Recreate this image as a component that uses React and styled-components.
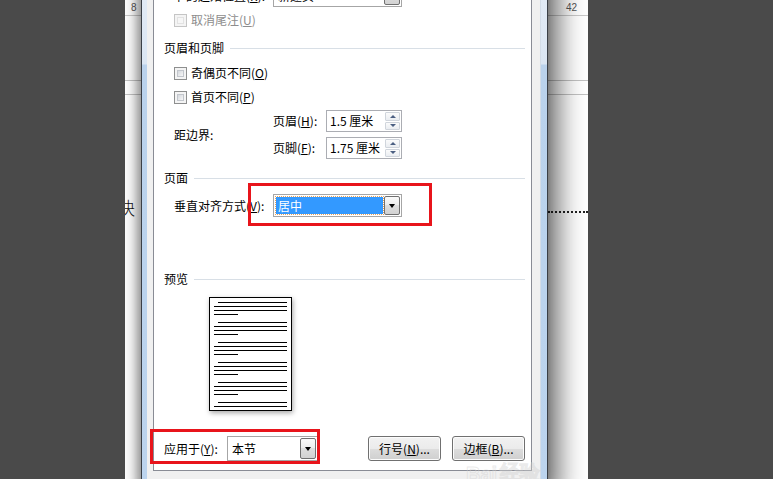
import React from "react";
import styled, { createGlobalStyle } from "styled-components";

const GlobalStyle = createGlobalStyle`
  html, body {
    margin: 0;
    padding: 0;
    overflow: hidden;
  }
  body {
    font-family: "Noto Sans CJK SC", "Noto Sans", sans-serif;
  }
`;

const Screen = styled.div`
  position: relative;
  display: flex;
  width: 773px;
  height: 479px;
  overflow: hidden;
  background: #4a4a4a;
`;

const Gutter = styled.div`
  flex: ${(p) => (p.$w ? `0 0 ${p.$w}px` : "1")};
`;

const DocPage = styled.div`
  position: relative;
  flex: 0 0 463px;
  display: flex;
  flex-direction: column;
  background: #fff;
  overflow: hidden;
`;

const RulerRow = styled.div`
  display: flex;
  justify-content: space-between;
  align-items: center;
  height: 15px;
  padding: 0 11px 0 6px;
  border-bottom: 1px solid #c9c9c9;
  font-family: "Liberation Sans", Arial, sans-serif;
  font-size: 10px;
  color: #555;
`;

const TableBand = styled.div`
  margin-top: 64px;
  height: 13px;
  border-top: 1px solid #c2c2c2;
  border-bottom: 1px solid #c2c2c2;
`;

const TextLine = styled.div`
  display: flex;
  align-items: flex-end;
  margin-top: 103px;
  height: 18px;
`;

const Glyph = styled.span`
  margin-left: -8px;
  font-size: 18px;
  line-height: 18px;
  color: #111;
  font-weight: 300;
`;

const Dots = styled.span`
  margin-left: auto;
  margin-bottom: 3px;
  width: 40px;
  border-bottom: 2px dotted #222;
`;

const Dialog = styled.div`
  position: absolute;
  left: 16px;
  top: -40px;
  width: 407px;
  height: 540px;
  box-sizing: border-box;
  display: flex;
  padding: 0 6px 0 5px;
  border-left: 1px solid #3a3f46;
  border-right: 1px solid #3a3f46;
  background: linear-gradient(#e4ecf6 0px, #dbe6f3 104px, #bad2ec 105px, #bcd4ee 100%);
  box-shadow: -4px 0 10px rgba(0, 0, 0, 0.35), 10px 0 26px rgba(0, 0, 0, 0.6);
`;

const Body = styled.div`
  flex: 1;
  padding: 10px 8px 0 6px;
  background: #f0f0f0;
  border-right: 1px solid #d3dce7;
`;

const TabPage = styled.div`
  display: flex;
  flex-direction: column;
  padding: 0 6px 9px 10px;
  border: 1px solid #898c95;
  background: #fff;
  font-size: 12px;
  line-height: 16px;
  color: #000;
`;

const Key = styled.u`
  text-underline-offset: 1px;
`;

const SectionHead = styled.div`
  display: flex;
  align-items: center;
  gap: 6px;
  height: 16px;
  margin-top: ${(p) => p.$mt}px;
`;

const Rule = styled.div`
  flex: 1;
  height: 1px;
  background: #d8dfe6;
`;

const Row = styled.div`
  position: relative;
  display: flex;
  align-items: center;
  height: ${(p) => p.$h}px;
  margin-top: ${(p) => p.$mt}px;
  padding-left: ${(p) => (p.$indent ? 10 : 0)}px;
`;

const Label = styled.span`
  flex: 0 0 ${(p) => p.$w}px;
  white-space: nowrap;
  color: ${(p) => (p.$disabled ? "#8d8d8d" : "#000")};
`;

const Combo = styled.div`
  box-sizing: border-box;
  display: flex;
  width: ${(p) => p.$w}px;
  height: 100%;
  padding: 1px;
  border: 1px solid #a6a6a6;
  background: #fff;
`;

const ComboValue = styled.div`
  flex: 1;
  display: flex;
  align-items: center;
  padding-left: ${(p) => (p.$selected ? 2 : 3)}px;
  margin: ${(p) => (p.$selected ? "1px" : "0")};
  background: ${(p) => (p.$selected ? "#3399ff" : "transparent")};
  color: ${(p) => (p.$selected ? "#fff" : "#000")};
  outline: ${(p) => (p.$selected ? "1px dotted #e8a25a" : "none")};
`;

const DropButton = styled.div`
  box-sizing: border-box;
  flex: 0 0 16px;
  display: flex;
  align-items: center;
  justify-content: center;
  border: 1px solid #707070;
  border-radius: 2px;
  background: linear-gradient(#fafafa, #ececec 50%, #dedede 50%, #d2d2d2);

  &::after {
    content: "";
    border-left: 3.5px solid transparent;
    border-right: 3.5px solid transparent;
    border-top: 4px solid #000;
  }
`;

const CheckRow = styled.label`
  display: flex;
  align-items: center;
  gap: 4px;
  height: 16px;
  margin-top: ${(p) => p.$mt}px;
  padding-left: 10px;
  color: ${(p) => (p.$disabled ? "#8d8d8d" : "#000")};
`;

const Box = styled.span`
  position: relative;
  box-sizing: border-box;
  width: 13px;
  height: 13px;
  border: 1px solid ${(p) => (p.$disabled ? "#c5c5c5" : "#8e8f8f")};
  background: #f4f4f4;

  &::after {
    content: "";
    position: absolute;
    inset: 2px;
    border: 1px solid ${(p) => (p.$disabled ? "#e2e2e2" : "#c2c6cc")};
    background: ${(p) =>
      p.$disabled ? "#f6f6f6" : "linear-gradient(135deg, #d4d8dd, #f7f7f7)"};
  }
`;

const MarginGroup = styled.div`
  display: flex;
  align-items: center;
  margin-top: ${(p) => p.$mt}px;
  padding-left: 10px;
`;

const SpinColumn = styled.div`
  display: flex;
  flex-direction: column;
  gap: 5px;
`;

const SpinRow = styled.div`
  display: flex;
  align-items: center;
  height: 22px;
`;

const SpinInput = styled.div`
  box-sizing: border-box;
  display: flex;
  align-items: center;
  width: 76px;
  height: 100%;
  padding: 1px 1px 1px 3px;
  border: 1px solid #abadb3;
  background: #fff;
`;

const SpinText = styled.span`
  flex: 1;
`;

const SpinButtons = styled.div`
  display: flex;
  flex-direction: column;
  gap: 1px;
  width: 15px;
  height: 100%;
`;

const SpinButton = styled.div`
  flex: 1;
  display: flex;
  align-items: center;
  justify-content: center;
  border: 1px solid #d0d5dc;
  border-radius: 1px;
  background: linear-gradient(#fbfbfb, #eaedf1);

  &::after {
    content: "";
    border-left: 3px solid transparent;
    border-right: 3px solid transparent;
    ${(p) => (p.$down ? "border-top" : "border-bottom")}: 3px solid #4b5f82;
  }
`;

const Highlight = styled.div`
  position: absolute;
  left: ${(p) => p.$x}px;
  top: ${(p) => p.$y}px;
  width: ${(p) => p.$w}px;
  height: ${(p) => p.$h}px;
  box-sizing: border-box;
  border: 3px solid #e8141b;
  pointer-events: none;
`;

const PreviewPage = styled.div`
  display: flex;
  flex-direction: column;
  gap: 7px;
  box-sizing: border-box;
  width: 83px;
  height: 114px;
  margin: 10px 0 0 45px;
  padding: 4px 4px 0;
  border: 1px solid #000;
  background: #fff;
  overflow: hidden;
  box-shadow: 1px 2px 5px rgba(0, 0, 0, 0.35);
`;

const LineGroup = styled.div`
  display: flex;
  flex-direction: column;
  gap: 3px;
`;

const PreviewLine = styled.div`
  height: 1px;
  flex-shrink: 0;
  margin-left: ${(p) => (p.$indent ? 4 : 0)}px;
  width: ${(p) => (p.$short ? "24px" : "auto")};
  background: #000;
`;

const Spacer = styled.div`
  flex: 1;
`;

const Button = styled.button`
  box-sizing: border-box;
  width: 73px;
  height: 100%;
  margin-left: ${(p) => p.$ml || 0}px;
  padding: 0;
  border: 1px solid #707070;
  border-radius: 3px;
  background: linear-gradient(#f2f2f2, #ebebeb 50%, #dddddd 50%, #cfcfcf);
  box-shadow: inset 0 0 0 1px #fcfcfc;
  font-family: inherit;
  font-size: 12px;
  color: #000;
`;

const Watermark = styled.div`
  position: absolute;
  left: 466px;
  top: 459px;
  display: flex;
  align-items: flex-end;
  gap: 3px;
  font-family: "Liberation Sans", Arial, sans-serif;
  font-size: 20px;
  font-weight: 700;
  color: transparent;
  -webkit-text-stroke: 1px rgba(210, 210, 210, 0.45);
  pointer-events: none;
`;

const previewGroups = [0, 1, 2, 3, 4, 5];

function Preview() {
  return (
    <PreviewPage>
      {previewGroups.map((g) => (
        <LineGroup key={g}>
          <PreviewLine $indent />
          <PreviewLine />
          <PreviewLine />
          <PreviewLine $short />
        </LineGroup>
      ))}
    </PreviewPage>
  );
}

function Spin({ label, keyChar, value }) {
  return (
    <SpinRow>
      <Label $w={53}>
        {label}(<Key>{keyChar}</Key>):
      </Label>
      <SpinInput>
        <SpinText>{value}</SpinText>
        <SpinButtons>
          <SpinButton />
          <SpinButton $down />
        </SpinButtons>
      </SpinInput>
    </SpinRow>
  );
}

function Check({ mt, disabled, text, keyChar }) {
  return (
    <CheckRow $mt={mt} $disabled={disabled}>
      <Box $disabled={disabled} />
      <span>
        {text}(<Key>{keyChar}</Key>)
      </span>
    </CheckRow>
  );
}

export default function App() {
  return (
    <>
      <GlobalStyle />
      <Screen>
        <Gutter $w={125} />
        <DocPage>
          <RulerRow>
            <span>8</span>
            <span>42</span>
          </RulerRow>
          <TableBand />
          <TextLine>
            <Glyph>块</Glyph>
            <Dots />
          </TextLine>

          <Dialog>
            <Body>
              <TabPage>
                <Row $indent $mt={13} $h={23}>
                  <Label $w={99}>
                    节的起始位置(<Key>R</Key>):
                  </Label>
                  <Combo $w={129}>
                    <ComboValue>新建页</ComboValue>
                    <DropButton />
                  </Combo>
                </Row>
                <Check mt={5} disabled text="取消尾注" keyChar="U" />

                <SectionHead $mt={12}>
                  页眉和页脚
                  <Rule />
                </SectionHead>
                <Check mt={9} text="奇偶页不同" keyChar="O" />
                <Check mt={8} text="首页不同" keyChar="P" />
                <MarginGroup $mt={5}>
                  <Label $w={99}>距边界:</Label>
                  <SpinColumn>
                    <Spin label="页眉" keyChar="H" value="1.5 厘米" />
                    <Spin label="页脚" keyChar="F" value="1.75 厘米" />
                  </SpinColumn>
                </MarginGroup>

                <SectionHead $mt={11}>
                  页面
                  <Rule />
                </SectionHead>
                <Row $indent $mt={8} $h={23}>
                  <Label $w={99}>
                    垂直对齐方式(<Key>V</Key>):
                  </Label>
                  <Combo $w={129}>
                    <ComboValue $selected>居中</ComboValue>
                    <DropButton />
                  </Combo>
                  <Highlight $x={84} $y={-11} $w={184} $h={43} />
                </Row>

                <SectionHead $mt={54}>
                  预览
                  <Rule />
                </SectionHead>
                <Preview />

                <Row $mt={25} $h={25}>
                  <Label $w={63}>
                    应用于(<Key>Y</Key>):
                  </Label>
                  <Combo $w={91}>
                    <ComboValue>本节</ComboValue>
                    <DropButton />
                  </Combo>
                  <Spacer />
                  <Button>
                    行号(<Key>N</Key>)...
                  </Button>
                  <Button $ml={11}>
                    边框(<Key>B</Key>)...
                  </Button>
                  <Highlight $x={-14} $y={-7} $w={170} $h={35} />
                </Row>
              </TabPage>
            </Body>
          </Dialog>
        </DocPage>
        <Gutter />
        <Watermark>
          <span>Bai</span>
          <span>经验</span>
        </Watermark>
      </Screen>
    </>
  );
}
